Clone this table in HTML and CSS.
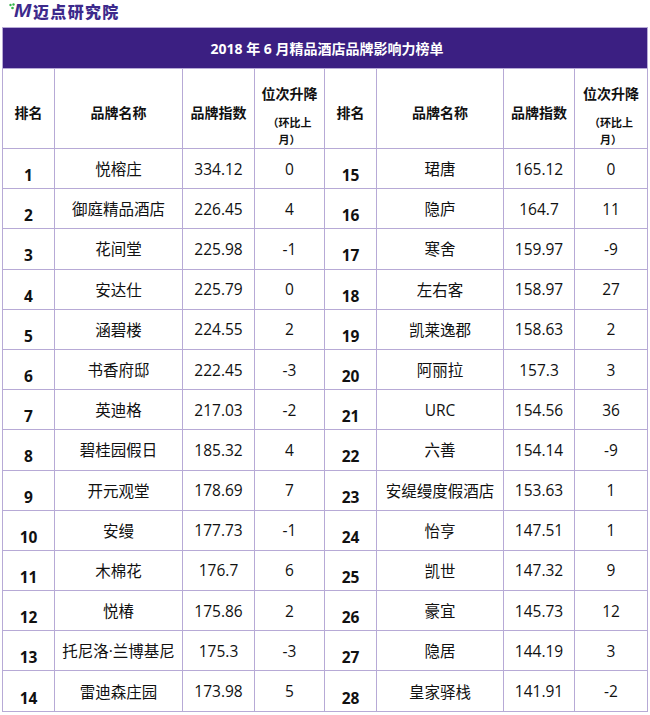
FILE: index.html
```html
<!DOCTYPE html>
<html lang="zh">
<head>
<meta charset="utf-8">
<link rel="stylesheet" href="styles.css">
</head>
<body>
<div class="logo">
  <svg class="dots" width="8" height="8" viewBox="0 0 8 8"><circle cx="1.5" cy="2" r="1.2" fill="#35b34a"/><circle cx="4.5" cy="1.5" r="1.2" fill="#35b34a"/><circle cx="3.5" cy="5" r="1.3" fill="#35b34a"/></svg>
  <span class="m">M</span><span class="cn">迈<span class="g">点</span>研究院</span>
</div>
<table class="rank">
  <colgroup>
    <col style="width:52px"><col style="width:128px"><col style="width:72px"><col style="width:70px">
    <col style="width:52px"><col style="width:127px"><col style="width:71px"><col style="width:73px">
  </colgroup>
  <thead>
    <tr class="title"><th colspan="8">2018 年 6 月精品酒店品牌影响力榜单</th></tr>
    <tr class="heads">
      <th>排名</th><th>品牌名称</th><th>品牌指数</th>
      <th class="chg"><div>位次升降</div><div class="sub">（环比上<br>月）</div></th>
      <th>排名</th><th>品牌名称</th><th>品牌指数</th>
      <th class="chg"><div>位次升降</div><div class="sub">（环比上<br>月）</div></th>
    </tr>
  </thead>
  <tbody id="rows"></tbody>
</table>
<script>
var d=[
["1","悦榕庄","334.12","0","15","珺唐","165.12","0"],
["2","御庭精品酒店","226.45","4","16","隐庐","164.7","11"],
["3","花间堂","225.98","-1","17","寒舍","159.97","-9"],
["4","安达仕","225.79","0","18","左右客","158.97","27"],
["5","涵碧楼","224.55","2","19","凯莱逸郡","158.63","2"],
["6","书香府邸","222.45","-3","20","阿丽拉","157.3","3"],
["7","英迪格","217.03","-2","21","URC","154.56","36"],
["8","碧桂园假日","185.32","4","22","六善","154.14","-9"],
["9","开元观堂","178.69","7","23","安缇缦度假酒店","153.63","1"],
["10","安缦","177.73","-1","24","怡亨","147.51","1"],
["11","木棉花","176.7","6","25","凯世","147.32","9"],
["12","悦椿","175.86","2","26","豪宜","145.73","12"],
["13","托尼洛·兰博基尼","175.3","-3","27","隐居","144.19","3"],
["14","雷迪森庄园","173.98","5","28","皇家驿栈","141.91","-2"]];
var h="";
d.forEach(function(r){
  h+="<tr>";
  r.forEach(function(c,i){
    h+="<td class=\""+(i%4===0?"no":"")+"\">"+c+"</td>";
  });
  h+="</tr>";
});
document.getElementById("rows").innerHTML=h;
</script>
</body>
</html>
```
FILE: styles.css
```css
html, body {
  margin: 0;
  padding: 0;
  background: #ffffff;
}
body {
  font-family: "Open Sans", "Noto Sans CJK SC", sans-serif;
  color: #111111;
}
.logo {
  height: 27px;
  display: flex;
  align-items: flex-start;
  padding-left: 9px;
  padding-top: 1px;
  box-sizing: border-box;
}
.logo .dots {
  margin-top: 2px;
  flex: none;
}
.logo .m {
  font-family: "Liberation Sans", sans-serif;
  font-weight: bold;
  font-style: italic;
  font-size: 18px;
  line-height: 20px;
  color: #3d2a8c;
  margin-left: -3px;
  transform: scaleX(1.15);
  transform-origin: left center;
}
.logo .cn {
  font-family: "Noto Sans CJK SC", sans-serif;
  font-weight: 900;
  font-size: 16px;
  line-height: 20px;
  color: #3d2a8c;
  letter-spacing: 1.3px;
  margin-left: 4px;
}
.logo .g {
  color: #3d2a8c;
}
table.rank {
  margin-left: 2px;
  width: 645px;
  table-layout: fixed;
  border-collapse: collapse;
  text-align: center;
}
table.rank th, table.rank td {
  border: 1px solid #b7aad6;
  padding: 0;
}
tr.title th {
  background: #3b1f82;
  color: #ffffff;
  height: 40px;
  font-family: "Open Sans", "Noto Sans CJK SC", sans-serif;
  font-size: 14px;
  font-weight: bold;
  padding-left: 4px;
}
tr.heads th {
  height: 72px;
  font-family: "Noto Sans CJK SC", sans-serif;
  font-size: 14px;
  font-weight: bold;
  padding-top: 6px;
}
tr.heads th.chg {
  vertical-align: top;
  padding-top: 14px;
  height: 64px;
  line-height: 20px;
}
.chg .sub {
  font-size: 11px;
  line-height: 17px;
  margin-top: 11px;
}
tbody td {
  height: 39.2px;
  font-size: 15.5px;
  font-family: "Open Sans", "Noto Sans CJK SC", sans-serif;
}
tbody td.no {
  font-weight: bold;
  font-size: 15.5px;
  padding-top: 13px;
  height: 26.2px;
}
```
